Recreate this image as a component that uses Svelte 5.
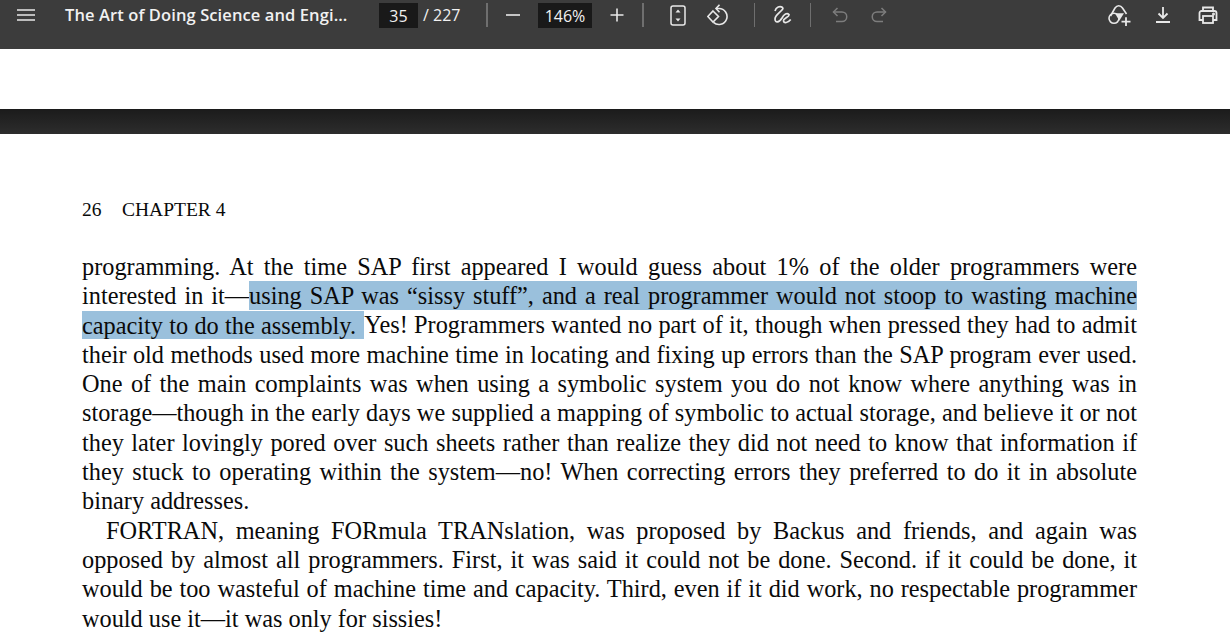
<script>
	const lines = [
		[{ t: 'programming. At the time SAP first appeared I would guess about 1% of the older programmers were' }],
		[{ t: 'interested in it—' }, { t: 'using SAP was “sissy stuff”, and a real programmer would not stoop to wasting machine', hl: true }],
		[{ t: 'capacity to do the assembly. ', hl: true, tail: true }, { t: 'Yes! Programmers wanted no part of it, though when pressed they had to admit' }],
		[{ t: 'their old methods used more machine time in locating and fixing up errors than the SAP program ever used.' }],
		[{ t: 'One of the main complaints was when using a symbolic system you do not know where anything was in' }],
		[{ t: 'storage—though in the early days we supplied a mapping of symbolic to actual storage, and believe it or not' }],
		[{ t: 'they later lovingly pored over such sheets rather than realize they did not need to know that information if' }],
		[{ t: 'they stuck to operating within the system—no! When correcting errors they preferred to do it in absolute' }],
		{ last: 'binary addresses.' },
		{ indent: true, parts: [{ t: 'FORTRAN, meaning FORmula TRANslation, was proposed by Backus and friends, and again was' }] },
		[{ t: 'opposed by almost all programmers. First, it was said it could not be done. Second. if it could be done, it' }],
		[{ t: 'would be too wasteful of machine time and capacity. Third, even if it did work, no respectable programmer' }],
		{ last: 'would use it—it was only for sissies!' }
	];
</script>

<div class="viewer">
	<header class="toolbar">
		<div class="left">
			<svg class="menu" width="18" height="12" viewBox="0 0 18 12"><path d="M0 1h18M0 6h18M0 11h18" stroke="#e8e8e8" stroke-width="1.6" /></svg>
			<div class="title">The Art of Doing Science and Engi...</div>
		</div>
		<div class="center">
			<span class="box pagebox">35</span>
			<span class="total">/ 227</span>
			<span class="sep tall"></span>
			<svg class="minus" width="16" height="16" viewBox="0 0 16 16"><path d="M1 8h14" stroke="#e8e8e8" stroke-width="1.6" /></svg>
			<span class="box zoombox">146%</span>
			<svg class="plus" width="16" height="16" viewBox="0 0 16 16"><path d="M1.500 8h13M8 1.500v13" stroke="#e8e8e8" stroke-width="1.6" /></svg>
			<span class="sep tall second"></span>
			<svg class="fit" width="16" height="21" viewBox="0 0 16 21" fill="none" stroke="#e8e8e8" stroke-width="1.5"><rect x="1" y="1" width="14" height="19" rx="2" /><path d="M8 4.500l-2.500 3h5zM8 16.500l-2.500-3h5z" fill="#e8e8e8" stroke="none" /><path d="M5.500 9.800h5" stroke-width="0" /></svg>
			<svg class="rotate" width="22" height="22" viewBox="0 0 22 22" fill="none" stroke="#e8e8e8" stroke-width="1.6"><path d="M6 7l5.500 5.500L6 18L.8 12.500z" /><path d="M9 4.500H12A8 8 0 1 1 6.500 18.300" /><path d="M12.500 .8L9 4.500L12.500 8.200" /></svg>
			<span class="sep third"></span>
			<svg class="draw" width="20" height="20" viewBox="0 1 20 20" fill="none" stroke="#e8e8e8" stroke-width="1.7"><path d="M2 7C3 3 7 1.500 9.500 3.500C12 6 2 10 2 15C2 19 6 19 9 14C11 10 14 8.500 16 10.500C17 13 10 14 10.500 17C11 19.500 15 19 17.700 15.500" /></svg>
			<span class="sep fourth"></span>
			<svg class="undo" width="16" height="16" viewBox="0 0 16 16" fill="none" stroke="#7d7d7d" stroke-width="1.5"><path d="M5.500 1L1.500 5L5.500 9" /><path d="M1.500 5H10a4.500 4.500 0 0 1 0 9.500H4" /></svg>
			<svg class="redo" width="16" height="16" viewBox="0 0 16 16" fill="none" stroke="#7d7d7d" stroke-width="1.5"><path d="M10.500 1L14.500 5L10.500 9" /><path d="M14.500 5H6a4.500 4.500 0 0 0 0 9.500H12" /></svg>
		</div>
		<div class="right">
			<svg class="add" width="24" height="22" viewBox="0 0 24 22" fill="none" stroke="#e8e8e8" stroke-width="1.6"><path d="M2.500 12L7 4C9 1 12.500 1 14.500 4L18.500 10" /><circle cx="6" cy="14.300" r="5" /><path d="M7 9.300H16L11.300 16.700z" fill="#e8e8e8" stroke="none" /><path d="M18 13.200v9M13.500 17.700h9" stroke-width="1.800" /></svg>
			<svg class="save" width="16" height="16" viewBox="0 0 16 16" fill="none" stroke="#e8e8e8" stroke-width="1.8"><path d="M8 0v10.500M3.500 6.500L8 11L12.500 6.500M1 15h14" /></svg>
			<svg class="print" width="20" height="18" viewBox="0 0 20 18" fill="none" stroke="#e8e8e8" stroke-width="1.8"><path d="M5 5V1.500h10V5M5 14H1.500V7a2 2 0 0 1 2-2h13a2 2 0 0 1 2 2v7H15" /><rect x="5" y="10" width="10" height="7" /><circle cx="15.500" cy="8" r=".6" fill="#e8e8e8" /></svg>
		</div>
	</header>

	<div class="gap"></div>
	<div class="band"></div>

	<main class="page">
		<div class="running"><span class="num">26</span><span>CHAPTER 4</span></div>
		<div class="body">
			{#each lines as line}
				{#if line.last}
					<div class="line plain">{line.last}</div>
				{:else if line.indent}
					<div class="line indent">{#each line.parts as p}<span>{p.t}</span>{/each}</div>
				{:else}
					<div class="line">{#each line as p}{#if p.hl}<span class="hl" class:tail={p.tail}>{p.t}</span>{:else}<span>{p.t}</span>{/if}{/each}</div>
				{/if}
			{/each}
		</div>
	</main>
</div>

<style>
	:global(body) {
		margin: 0;
		background: #fff;
		overflow: hidden;
	}

	.viewer {
		width: 1230px;
		height: 634px;
		overflow: hidden;
	}

	.toolbar {
		height: 49px;
		background: #3c3c3c;
		color: #f1f1f1;
		font-family: 'Open Sans', sans-serif;
		display: flex;
		align-items: flex-start;
	}

	.left {
		display: flex;
		align-items: center;
		height: 30px;
		width: 379px;
		flex: none;
	}

	.menu {
		margin-left: 17px;
	}

	.title {
		margin-left: 30px;
		margin-bottom: 1px;
		font-size: 16.500px;
		font-weight: 600;
		letter-spacing: 0.1px;
		white-space: nowrap;
	}

	.center {
		display: flex;
		align-items: center;
		height: 30px;
		flex: 1;
	}

	.box {
		background: #191919;
		height: 25px;
		margin-top: 1px;
		display: flex;
		align-items: center;
		justify-content: center;
		font-size: 16px;
	}

	.pagebox {
		width: 39px;
	}

	.total {
		margin-left: 5px;
		width: 63px;
		font-size: 16px;
	}

	.sep {
		width: 1px;
		height: 24px;
		background: #6f6f6f;
		flex: none;
	}

	.tall {
		width: 2px;
	}

	.minus {
		margin-left: 17px;
	}

	.zoombox {
		margin-left: 17px;
		width: 54px;
	}

	.plus {
		margin-left: 17px;
	}

	.second {
		margin-left: 17px;
	}

	.fit {
		margin-left: 26px;
	}

	.rotate {
		margin-left: 21px;
	}

	.third {
		margin-left: 25px;
	}

	.draw {
		margin-left: 18px;
	}

	.fourth {
		margin-left: 17px;
	}

	.undo {
		margin-left: 21px;
	}

	.redo {
		margin-left: 23px;
	}

	.right {
		display: flex;
		align-items: center;
		height: 30px;
		padding-right: 12px;
	}

	.save {
		margin-left: 23px;
	}

	.print {
		margin-left: 27px;
	}

	.gap {
		height: 60px;
		background: #fff;
	}

	.band {
		height: 25px;
		background: linear-gradient(#1b1b1b, #2d2d2d);
	}

	.page {
		padding: 63px 93px 0 82px;
		font-family: 'Liberation Serif', 'Times New Roman', serif;
		color: #0a0a0a;
	}

	.running {
		font-size: 19.500px;
		line-height: 25px;
		display: flex;
	}

	.num {
		width: 40px;
	}

	.body {
		margin-top: 29.600px;
		font-size: 24.300px;
	}

	.line {
		height: 29.330px;
		line-height: 29.330px;
		text-align: justify;
		text-align-last: justify;
		white-space: nowrap;
	}

	.plain {
		text-align-last: left;
	}

	.indent {
		padding-left: 24px;
	}

	.hl {
		background: #9ac0dc;
		padding: 0.500px 0 1px;
		white-space: pre-wrap;
	}

	.tail {
		padding-right: 2px;
	}
</style>
